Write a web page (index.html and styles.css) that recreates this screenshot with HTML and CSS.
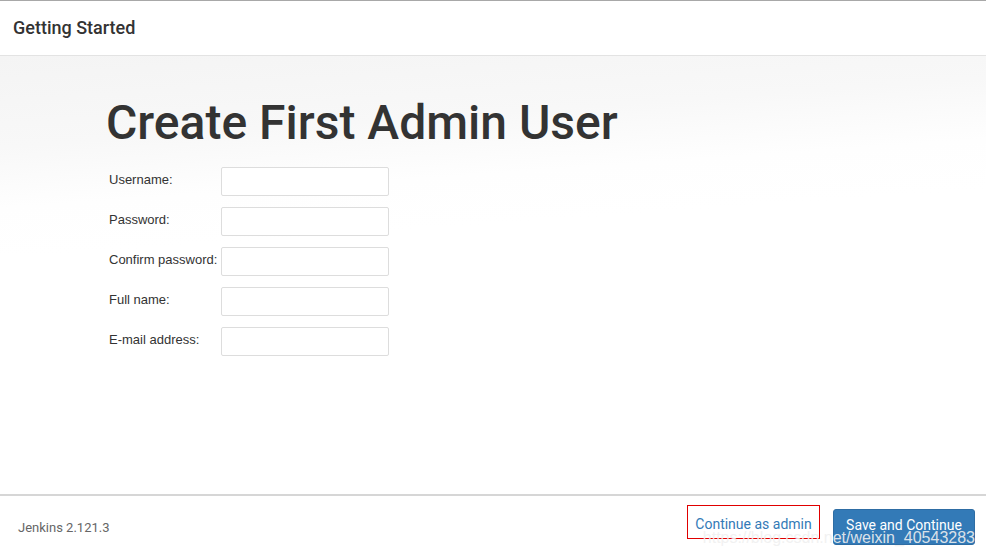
FILE: index.html
```html
<!DOCTYPE html>
<html>
<head>
<meta charset="utf-8">
<link rel="stylesheet" href="styles.css">
</head>
<body>
<div class="page">
  <header class="header">
    <h4 class="header-title">Getting Started</h4>
  </header>
  <main class="main">
    <h1 class="title">Create First Admin User</h1>
    <form class="form">
      <div class="row"><label class="label">Username:</label><input class="input" type="text"></div>
      <div class="row"><label class="label">Password:</label><input class="input" type="password"></div>
      <div class="row"><label class="label">Confirm password:</label><input class="input" type="password"></div>
      <div class="row"><label class="label">Full name:</label><input class="input" type="text"></div>
      <div class="row"><label class="label">E-mail address:</label><input class="input" type="text"></div>
    </form>
  </main>
  <footer class="footer">
    <span class="version">Jenkins 2.121.3</span>
    <div class="actions">
      <button class="btn btn-link" type="button">Continue as admin</button>
      <button class="btn btn-primary" type="button">Save and Continue</button>
    </div>
    <span class="watermark">https://blog.csdn.net/weixin_40543283</span>
  </footer>
</div>
</body>
</html>
```
FILE: styles.css
```css
* { box-sizing: border-box; }
html, body { margin: 0; padding: 0; height: 100%; }
body {
  font-family: Roboto, "Liberation Sans", sans-serif;
  color: #333;
  background: #fff;
}
.page {
  height: 556px;
  display: flex;
  flex-direction: column;
  border-top: 1px solid #a8a8a8;
}
.header {
  height: 55px;
  border-bottom: 1px solid #e3e3e3;
  display: flex;
  align-items: center;
  padding-left: 13px;
  background: #fff;
}
.header-title {
  margin: 0;
  font-size: 18px;
  font-weight: 500;
  color: #333;
  padding-bottom: 1px;
}
.main {
  flex: 1;
  padding: 39px 0 0 106px;
  background: linear-gradient(176deg, #f4f4f4 0%, #f8f8f8 18%, #fefefe 30%, #fff 40%);
}
.title {
  margin: 0 0 16px 0;
  font-size: 48px;
  font-weight: 500;
  line-height: 56px;
  color: #333;
}
.form {
  display: flex;
  flex-direction: column;
  gap: 11px;
  padding-left: 3px;
}
.row {
  display: flex;
  align-items: center;
}
.label {
  width: 112px;
  font-family: "Liberation Sans", Arial, sans-serif;
  font-size: 13px;
  color: #333;
  padding-bottom: 4px;
  white-space: nowrap;
}
.input {
  width: 168px;
  height: 29px;
  border: 1px solid #ddd;
  border-radius: 2px;
  background: #fff;
  margin: 0;
}
.footer {
  position: relative;
  height: 62px;
  border-top: 2px solid #d6d6d6;
  display: flex;
  align-items: flex-start;
  justify-content: space-between;
  padding: 9px 11px 0 18px;
  background: #fff;
}
.version {
  font-size: 13px;
  color: #666;
  margin-top: 15px;
}
.actions {
  display: flex;
  align-items: flex-start;
  gap: 13px;
}
.btn {
  font-family: Roboto, "Liberation Sans", sans-serif;
  font-size: 14px;
  cursor: pointer;
}
.btn-link {
  height: 34px;
  width: 133px;
  border: 1px solid #e00000;
  background: #fff;
  color: #337ab7;
  padding: 4px 0 0 0;
}
.btn-primary {
  height: 36px;
  width: 142px;
  border: 1px solid #2e6da4;
  border-radius: 3px;
  background: #337ab7;
  color: #fff;
  padding: 0 0 4px 0;
  margin-top: 4px;
}
.watermark {
  position: absolute;
  right: 11px;
  bottom: 9px;
  font-family: "Liberation Sans", Arial, sans-serif;
  font-size: 16px;
  color: rgba(240, 240, 240, 0.9);
  pointer-events: none;
}
```
